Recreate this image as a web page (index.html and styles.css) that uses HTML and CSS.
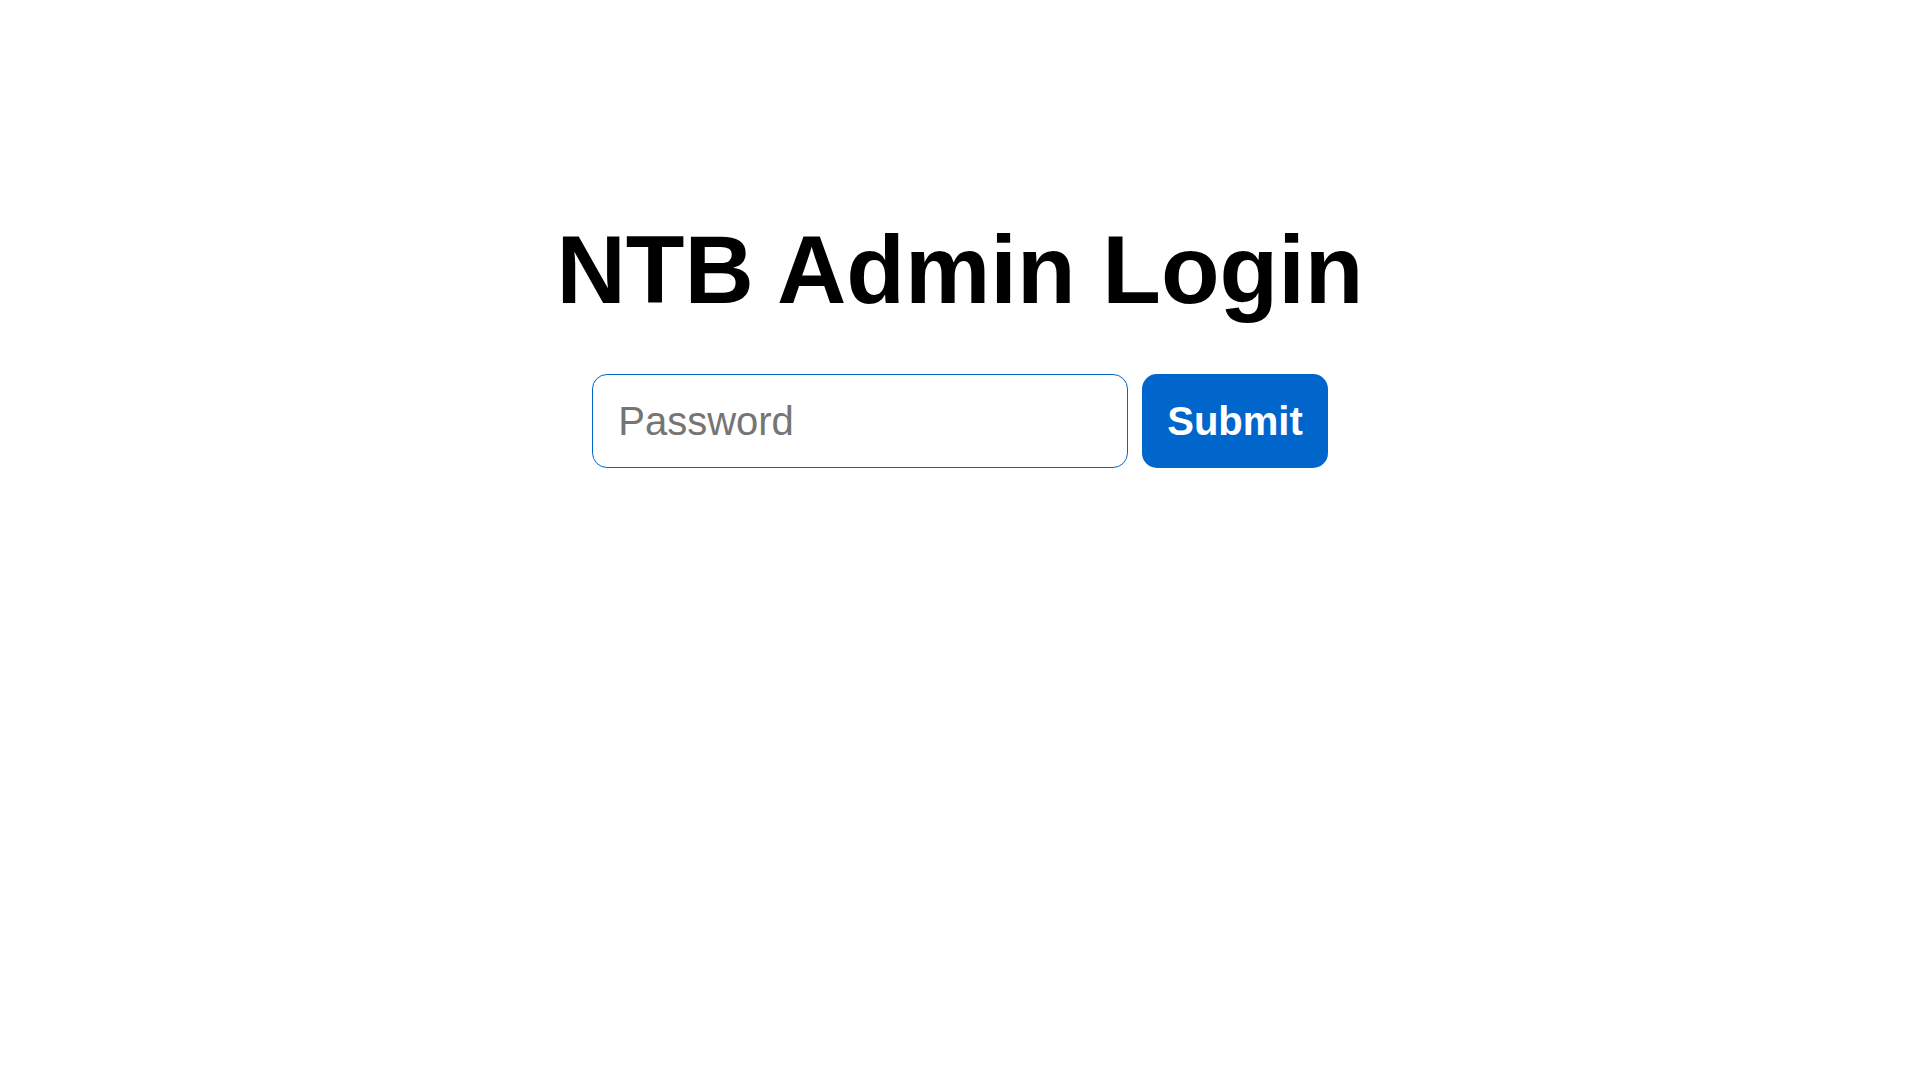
FILE: index.html
```html
<!DOCTYPE html>
<html lang="en">
<head>
<meta charset="utf-8">
<title>NTB Admin Login</title>
<link rel="stylesheet" href="styles.css">
</head>
<body>
<main class="login">
  <h1 class="login-title">NTB Admin Login</h1>
  <form class="login-form" onsubmit="return false;">
    <input class="login-input" type="password" placeholder="Password">
    <button class="login-button" type="submit">Submit</button>
  </form>
</main>
</body>
</html>
```
FILE: styles.css
```css
html, body {
  margin: 0;
  padding: 0;
  background: #ffffff;
}
body {
  font-family: "Liberation Sans", Arial, sans-serif;
  color: #000000;
}
.login {
  display: flex;
  flex-direction: column;
  align-items: center;
  padding-top: 206px;
}
.login-title {
  margin: 0;
  font-size: 96px;
  font-weight: bold;
  line-height: 128px;
}
.login-form {
  display: flex;
  gap: 14px;
  margin-top: 40px;
}
.login-input {
  box-sizing: border-box;
  width: 536px;
  height: 94px;
  padding: 0 25px;
  font-family: "Liberation Sans", Arial, sans-serif;
  font-size: 40px;
  color: #000;
  border: 1px solid #0066cc;
  border-radius: 15px;
  outline: none;
  background: #fff;
}
.login-input::placeholder {
  color: #757575;
}
.login-button {
  box-sizing: border-box;
  height: 94px;
  padding: 0 25px;
  font-family: "Liberation Sans", Arial, sans-serif;
  font-size: 40px;
  font-weight: bold;
  color: #ffffff;
  background: #0066cc;
  border: none;
  border-radius: 15px;
  cursor: pointer;
}
```
